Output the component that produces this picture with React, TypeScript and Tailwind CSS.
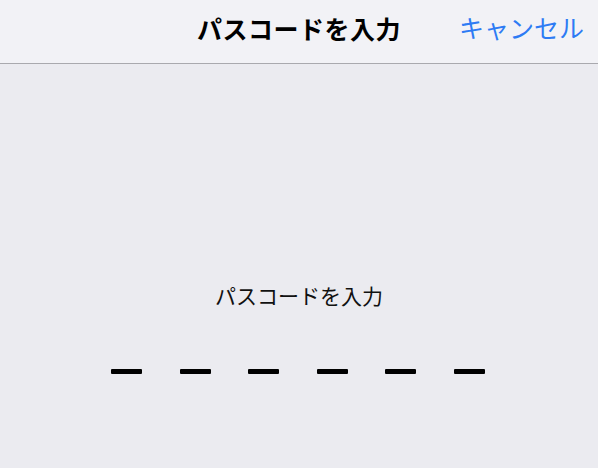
const font = { fontFamily: '"Noto Sans CJK JP", "Noto Sans", sans-serif' }

export default function App() {
  return (
    <div style={font} className="flex h-[468px] w-[598px] flex-col overflow-hidden bg-[#ebebf0]">
      <header className="relative flex h-[64px] shrink-0 items-center justify-center border-b border-[#a9a9ae] bg-[#f2f2f6] pb-[7px]">
        <span className="text-[25px] font-bold leading-none tracking-[0.5px] text-black">パスコードを入力</span>
        <span className="absolute right-[14px] top-[15px] text-[25px] leading-none text-[#2d7bf4]">
          キャンセル
        </span>
      </header>

      <main className="flex flex-1 flex-col items-center pt-[221px]">
        <div className="text-[21px] leading-none text-[#111]">パスコードを入力</div>
        <div className="mt-[63px] flex gap-[37.6px] pr-[2px]">
          {Array.from({ length: 6 }).map((_, i) => (
            <span key={i} className="block h-[5px] w-[31px] rounded-[1px] bg-black" />
          ))}
        </div>
      </main>
    </div>
  )
}
